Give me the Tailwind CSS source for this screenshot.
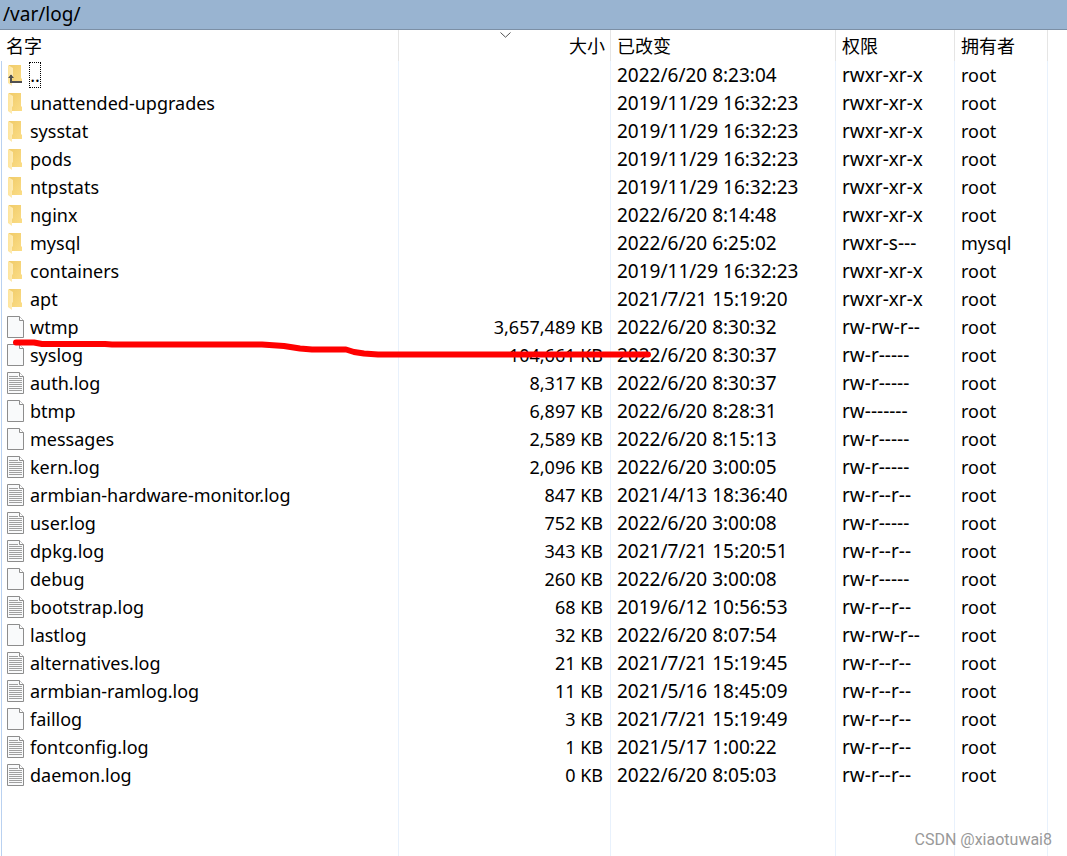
<!DOCTYPE html>
<html lang="zh-CN">
<head>
<meta charset="utf-8">
<title>/var/log/</title>
<script src="https://cdn.jsdelivr.net/npm/@tailwindcss/browser@4"></script>
</head>
<body class="bg-white text-black text-[18px] leading-7 font-['Noto_Sans','Noto_Sans_CJK_SC',sans-serif]">
<svg class="absolute w-0 h-0" aria-hidden="true">
  <defs>
    <linearGradient id="gold" x1="0" y1="0" x2="1" y2="1"><stop offset="0" stop-color="#f0cb68"/><stop offset="1" stop-color="#fbdd87"/></linearGradient>
    <linearGradient id="flap" x1="0" y1="0" x2="1" y2="0"><stop offset="0" stop-color="#ffe59c"/><stop offset="1" stop-color="#fdecb8"/></linearGradient>
    <symbol id="folder" viewBox="0 0 18 22">
      <path d="M2 1H14V14L15 15V19H2Z" fill="url(#gold)"/>
      <path d="M1 1L6 4V14L5 15V22L1 19Z" fill="url(#flap)"/>
    </symbol>
    <symbol id="up" viewBox="0 0 18 22">
      <use href="#folder" width="18" height="22"/>
      <path d="M4 11V18H15" fill="none" stroke="#505050" stroke-width="2"/>
      <path d="M1 14L4 10.5L7 14Z" fill="#505050"/>
    </symbol>
    <symbol id="file" viewBox="0 0 18 22">
      <path d="M.5 .5H12.5L16.5 4.5V21.5H.5Z" fill="#f9fafb" stroke="#8d8d8d"/>
      <path d="M12.5 .5V4.5H16.5" fill="#fff" stroke="#8d8d8d"/>
    </symbol>
    <symbol id="text" viewBox="0 0 18 22">
      <use href="#file" width="18" height="22"/>
      <path d="M2 4.5H11M2 6.5H15M2 8.5H15M2 10.5H15M2 12.5H15M2 14.5H15M2 16.5H15M2 18.5H15" stroke="#a0a0a0"/>
    </symbol>
  </defs>
</svg>
<main class="relative min-h-screen">
  <header class="h-[30px] bg-[#99b4d1] border-b border-[#7c8fa5] px-[3px] text-[19px]"><h1>/var/log/</h1></header>
  <div class="pl-px">
    <table class="w-full h-[calc(100vh-30px)] table-fixed border-separate border-spacing-0 whitespace-nowrap text-left">
      <colgroup><col class="w-[398px]"><col class="w-[212px]"><col class="w-[225px]"><col class="w-[119px]"><col class="w-[93px]"><col></colgroup>
      <thead>
        <tr class="h-[31px]">
          <th class="font-normal p-0 pl-[5px] border-r border-[#e5e5e5]">名字</th>
          <th class="relative font-normal p-0 pr-[5px] border-r border-[#e5e5e5] text-right" aria-sort="descending">大小<svg class="absolute left-[101px] top-[2px] w-[11px] h-[6px]" viewBox="0 0 11 6" fill="none" stroke="#505050"><path d="M.5 .5L5.5 5.2L10.5 .5"/></svg></th>
          <th class="font-normal p-0 pl-[6px] border-r border-[#e5e5e5]">已改变</th>
          <th class="font-normal p-0 pl-[6px] border-r border-[#e5e5e5]">权限</th>
          <th class="font-normal p-0 pl-[6px] border-r border-[#e5e5e5]">拥有者</th>
          <th class="p-0"></th>
        </tr>
      </thead>
      <tbody id="rows"></tbody>
    </table>
  </div>
  <svg class="absolute left-0 top-[330px] w-[660px] h-[40px] pointer-events-none" viewBox="0 0 660 40" fill="none" stroke="#f00" stroke-width="6" stroke-linecap="round" stroke-linejoin="round" aria-hidden="true"><path d="M16 12.5H34L42 14H105L112 14.5H262L284 16L300 18.5L312 19.5H346L354 22L364 23.5L378 24.5H648"/></svg>
  <p class="absolute right-[15px] bottom-[4px] text-[16px] leading-6 text-[#999] font-[Roboto,sans-serif]">CSDN @xiaotuwai8</p>
</main>
<script>
const data = `up|..||2022/6/20 8:23:04|rwxr-xr-x|root
folder|unattended-upgrades||2019/11/29 16:32:23|rwxr-xr-x|root
folder|sysstat||2019/11/29 16:32:23|rwxr-xr-x|root
folder|pods||2019/11/29 16:32:23|rwxr-xr-x|root
folder|ntpstats||2019/11/29 16:32:23|rwxr-xr-x|root
folder|nginx||2022/6/20 8:14:48|rwxr-xr-x|root
folder|mysql||2022/6/20 6:25:02|rwxr-s---|mysql
folder|containers||2019/11/29 16:32:23|rwxr-xr-x|root
folder|apt||2021/7/21 15:19:20|rwxr-xr-x|root
file|wtmp|3,657,489 KB|2022/6/20 8:30:32|rw-rw-r--|root
file|syslog|104,661 KB|2022/6/20 8:30:37|rw-r-----|root
text|auth.log|8,317 KB|2022/6/20 8:30:37|rw-r-----|root
file|btmp|6,897 KB|2022/6/20 8:28:31|rw-------|root
file|messages|2,589 KB|2022/6/20 8:15:13|rw-r-----|root
text|kern.log|2,096 KB|2022/6/20 3:00:05|rw-r-----|root
text|armbian-hardware-monitor.log|847 KB|2021/4/13 18:36:40|rw-r--r--|root
text|user.log|752 KB|2022/6/20 3:00:08|rw-r-----|root
text|dpkg.log|343 KB|2021/7/21 15:20:51|rw-r--r--|root
file|debug|260 KB|2022/6/20 3:00:08|rw-r-----|root
text|bootstrap.log|68 KB|2019/6/12 10:56:53|rw-r--r--|root
file|lastlog|32 KB|2022/6/20 8:07:54|rw-rw-r--|root
text|alternatives.log|21 KB|2021/7/21 15:19:45|rw-r--r--|root
text|armbian-ramlog.log|11 KB|2021/5/16 18:45:09|rw-r--r--|root
file|faillog|3 KB|2021/7/21 15:19:49|rw-r--r--|root
text|fontconfig.log|1 KB|2021/5/17 1:00:22|rw-r--r--|root
text|daemon.log|0 KB|2022/6/20 8:05:03|rw-r--r--|root`;
document.getElementById('rows').innerHTML = data.split('\n').map(line => {
  const [icon, name, size, date, rights, owner] = line.split('|');
  const label = icon === 'up'
    ? '<span class="w-3 h-[26px] leading-[26px] outline-1 -outline-offset-1 outline-dotted outline-black text-center">..</span>'
    : `<span class="pl-px">${name}</span>`;
  return `<tr class="h-7">
    <td class="p-0 pl-[5px] border-l border-l-[#b9d1f0] border-r border-r-[#e8f1fc]"><div class="flex items-center h-7"><svg class="w-[18px] h-[22px] mr-1 shrink-0"><use href="#${icon}"/></svg>${label}</div></td>
    <td class="p-0 pr-[7px] text-right border-r border-[#e8f1fc]">${size}</td>
    <td class="p-0 pl-[6px] text-[19px] border-r border-[#e8f1fc]">${date}</td>
    <td class="p-0 pl-[6px] text-[19px] border-r border-[#e8f1fc]">${rights}</td>
    <td class="p-0 pl-[6px] border-r border-[#e8f1fc]">${owner}</td>
    <td class="p-0"></td></tr>`;
}).join('') + `<tr aria-hidden="true">
    <td class="p-0 border-l border-l-[#b9d1f0] border-r border-r-[#e8f1fc]"></td>
    <td class="p-0 border-r border-[#e8f1fc]"></td><td class="p-0 border-r border-[#e8f1fc]"></td>
    <td class="p-0 border-r border-[#e8f1fc]"></td><td class="p-0 border-r border-[#e8f1fc]"></td><td class="p-0"></td></tr>`;
</script>
</body>
</html>
